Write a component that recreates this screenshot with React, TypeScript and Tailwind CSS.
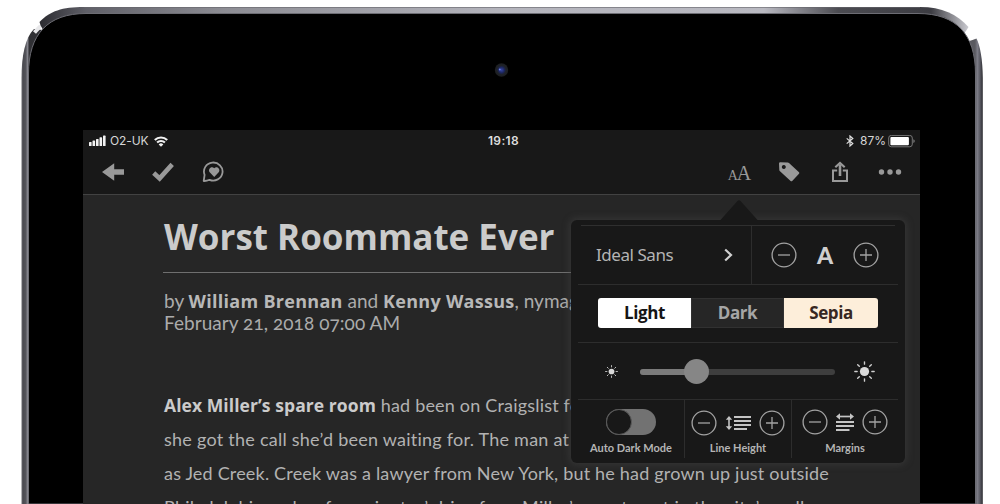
import React from "react";

function DeviceFrame() {
  return (
    <svg className="absolute inset-0" width="1000" height="504" viewBox="0 0 1000 504" aria-hidden="true">
      <defs>
        <linearGradient id="top" x1="40" x2="968" y1="0" y2="0" gradientUnits="userSpaceOnUse">
          <stop offset="0" stopColor="#2c2c31" />
          <stop offset="0.05" stopColor="#606068" />
          <stop offset="0.2" stopColor="#8d8d94" />
          <stop offset="0.5" stopColor="#b4b4bc" />
          <stop offset="0.78" stopColor="#b9b9c1" />
          <stop offset="0.86" stopColor="#4c4c52" />
          <stop offset="0.96" stopColor="#3c3c42" />
          <stop offset="1" stopColor="#c8c8ce" />
        </linearGradient>
        <linearGradient id="left" x1="21" x2="29" y1="0" y2="0" gradientUnits="userSpaceOnUse">
          <stop offset="0" stopColor="#77777d" />
          <stop offset="0.25" stopColor="#4a4a50" />
          <stop offset="0.6" stopColor="#55555b" />
          <stop offset="0.85" stopColor="#8d8d95" />
          <stop offset="1" stopColor="#303034" />
        </linearGradient>
        <linearGradient id="right" x1="975" x2="983" y1="0" y2="0" gradientUnits="userSpaceOnUse">
          <stop offset="0" stopColor="#5a5a60" />
          <stop offset="0.3" stopColor="#7c7c86" />
          <stop offset="0.6" stopColor="#5d5d66" />
          <stop offset="1" stopColor="#2a2a2e" />
        </linearGradient>
        <radialGradient id="lens">
          <stop offset="0" stopColor="#3546a8" />
          <stop offset="0.45" stopColor="#1b2458" />
          <stop offset="0.65" stopColor="#1f2229" />
          <stop offset="1" stopColor="#1c1e20" />
        </radialGradient>
      </defs>
      <path d="M21.500 504V78C21.500 56 25 38 34 29L60 32V504Z" fill="url(#left)" />
      <path d="M982.800 504V78C982.800 60 980 45 976.500 38.500L972.500 40L940 50V504Z" fill="url(#right)" />
      <path d="M39.500 22C50 11 62 7 84 7H920C942 7 957 14 968.500 27L966 31L940 60H70L41 27Z" fill="url(#top)" />
      <path d="M84 7.500H920" stroke="#66666c" strokeWidth="1" opacity="0.6" />
      <path d="M34.500 32.500L40.500 26" stroke="#e8e8ea" strokeWidth="4" />
      <path d="M28.500 504V74C28.500 34 48 13.500 86 13.500H918C956 13.500 975.500 34 975.500 74V504Z" fill="#000" stroke="#6d6d74" strokeWidth="1" />
      <circle cx="501.500" cy="70" r="6.700" fill="url(#lens)" />
      <circle cx="499.800" cy="69.500" r="1" fill="#6c7ddb" />
    </svg>
  );
}

function StatusBar() {
  return (
    <div className="grid h-[22px] grid-cols-3 items-center pl-[6px] pr-[5px] font-['Inter',sans-serif] text-[12px] text-[#d6d6d6]">
      <div className="flex items-center">
        <svg width="17" height="12" viewBox="0 0 17 12" fill="#f2f2f2">
          <rect x="0" y="7" width="2.600" height="4" rx=".6" />
          <rect x="3.500" y="5.500" width="2.600" height="5.500" rx=".6" />
          <rect x="7" y="4" width="2.600" height="7" rx=".6" />
          <rect x="10.500" y="2.300" width="2.600" height="8.700" rx=".6" />
          <rect x="14" y=".6" width="2.600" height="10.400" rx=".6" />
        </svg>
        <span className="ml-[4px] tracking-[-0.1px]">O2-UK</span>
        <svg className="ml-[5px]" width="14" height="11" viewBox="0 0 14 11" fill="none" stroke="#f2f2f2" strokeWidth="2.100">
          <path d="M.8 4.100a8.800 8.800 0 0 1 12.400 0" />
          <path d="M3.100 6.600a5.500 5.500 0 0 1 7.800 0" />
          <path d="M7 10.800L4.700 8.500a3.200 3.200 0 0 1 4.600 0Z" fill="#f2f2f2" stroke="none" />
        </svg>
      </div>
      <div className="pl-[3px] text-center font-semibold tracking-[0.35px] text-[#dedede]">19:18</div>
      <div className="flex items-center justify-end">
        <svg width="8" height="12" viewBox="0 0 8 12" fill="none" stroke="#e0e0e0" strokeWidth="1.200">
          <path d="M.7 3.400L6.800 8.500L4 11V1L6.800 3.500L.7 8.600" />
        </svg>
        <span className="ml-[6px]">87%</span>
        <svg className="ml-[2px]" width="27" height="13" viewBox="0 0 27 13">
          <rect x=".7" y=".4" width="23.600" height="11.400" rx="2.600" fill="none" stroke="#777" />
          <rect x="2.400" y="2" width="18.500" height="8.200" rx="1" fill="#fff" />
          <path d="M25.300 4.200v3.800q1.500-.4 1.500-1.900t-1.500-1.900" fill="#777" />
        </svg>
      </div>
    </div>
  );
}

function ToolButton({ children }: { children: React.ReactNode }) {
  return <button className="flex h-[40px] w-[50px] items-center justify-center">{children}</button>;
}

function Toolbar() {
  return (
    <div className="flex h-[42px] justify-between px-[5px]">
      <div className="flex">
        <ToolButton>
          <svg width="24" height="20" viewBox="0 0 24 20" fill="#999">
            <path d="M1 10L13.200 1.300V7.200H23V12.800H13.200V18.700Z" />
          </svg>
        </ToolButton>
        <ToolButton>
          <svg width="24" height="20" viewBox="0 0 24 20" fill="none" stroke="#999" strokeWidth="4.600">
            <path d="M2.700 11L8.600 16.400L21.200 2.400" />
          </svg>
        </ToolButton>
        <ToolButton>
          <svg className="ml-[2px]" width="24" height="22" viewBox="0 0 24 22">
            <path d="M1.700 20L2.600 13.800A9.300 9 0 1 1 7.600 18.800Q4.500 20.200 1.700 20Z" fill="none" stroke="#999" strokeWidth="1.800" strokeLinejoin="round" />
            <path d="M12.200 16L7.700 11.200C5.300 8.300 9.600 4.300 12.200 7.300C14.800 4.300 19.100 8.300 16.700 11.200Z" fill="#999" />
          </svg>
        </ToolButton>
      </div>
      <div className="flex">
        <ToolButton>
          <span className="mr-px flex items-baseline pt-px font-['Liberation_Serif',serif] leading-none text-[#999]">
            <span className="text-[14px]">A</span>
            <span className="text-[20px] -ml-px">A</span>
          </span>
        </ToolButton>
        <ToolButton>
          <svg className="mr-[2px]" width="22" height="22" viewBox="0 0 22 22">
            <path fillRule="evenodd" fill="#999" d="M1 2.500Q1 1.300 2.200 1.300L9.700 1.500Q10.500 1.600 11 2.100L21 11.200Q21.700 11.900 21 12.700L14.200 20Q13.400 20.700 12.600 20L2 10.300Q1.400 9.700 1.300 9ZM5.800 3.900a2 2 0 1 0 .01 0Z" />
          </svg>
        </ToolButton>
        <ToolButton>
          <svg width="18" height="22" viewBox="0 0 18 22" fill="none" stroke="#999" strokeWidth="2">
            <path d="M6.200 9.500H2V20H16V9.500H11.800" />
            <path d="M9 15V3.500" strokeWidth="2.600" />
            <path d="M4.300 6.200L9 2L13.700 6.200" strokeWidth="2.200" />
          </svg>
        </ToolButton>
        <ToolButton>
          <svg width="24" height="6" viewBox="0 0 24 6" fill="#999">
            <circle cx="3.500" cy="3" r="2.700" />
            <circle cx="12" cy="3" r="2.700" />
            <circle cx="20.500" cy="3" r="2.700" />
          </svg>
        </ToolButton>
      </div>
    </div>
  );
}

function Article() {
  return (
    <article className="flex-1 overflow-hidden whitespace-nowrap border-t border-[#424242] bg-[#262626] pl-[80px] pr-[90px] text-[#ababab]">
      <h1 className="pl-px pt-[20px] font-['Open_Sans',sans-serif] text-[35px] leading-[44px] font-bold text-[#cbcbcb]">Worst Roommate Ever</h1>
      <hr className="mt-[13px] border-t-[1.5px] border-[#6f6f6f]" />
      <div className="mt-[17px] pl-px text-[19px] leading-[22px] [font-feature-settings:'onum']">
        <p>
          by <b className="font-['Open_Sans',sans-serif] text-[18px] font-bold tracking-[0.28px] text-[#b8b8b8]">William Brennan</b> and{" "}
          <b className="font-['Open_Sans',sans-serif] text-[18px] font-bold tracking-[0.28px] text-[#b8b8b8]">Kenny Wassus</b>, nymag.com
        </p>
        <p className="tracking-[0.05px]">February 21, 2018 07:00 AM</p>
      </div>
      <div className="mt-[54px] pl-px text-[18px] leading-[34px] tracking-[0.19px] text-[#b2b2b2]">
        <p>
          <b className="font-['Open_Sans',sans-serif] text-[17.5px] font-bold tracking-[0.07px] text-[#cbcbcb]">Alex Miller’s spare room</b> had been on Craigslist for
        </p>
        <p className="tracking-[0.25px]">she got the call she’d been waiting for. The man at the</p>
        <p>as Jed Creek. Creek was a lawyer from New York, but he had grown up just outside</p>
        <p className="tracking-[0.25px]">Philadelphia, only a few minutes’ drive from Miller’s apartment in the city’s well-</p>
      </div>
    </article>
  );
}

function RoundButton({ plus = false, label }: { plus?: boolean; label: string }) {
  return (
    <button aria-label={label} className="size-[26px] shrink-0">
      <svg width="26" height="26" viewBox="0 0 26 26" fill="none" stroke="#a3a3a3" strokeWidth="1.300">
        <circle cx="13" cy="13" r="11.900" />
        <path d={plus ? "M7 13H19M13 7V19" : "M7 13H19"} />
      </svg>
    </button>
  );
}

function Sun({ size }: { size: number }) {
  return (
    <svg width={size} height={size} viewBox="0 0 20 20" stroke="#cfcfcf" strokeWidth="1.300" strokeLinecap="round">
      <circle cx="10" cy="10" r="4.400" fill="#dadada" stroke="none" />
      {[0, 45, 90, 135, 180, 225, 270, 315].map((angle) => (
        <path key={angle} d="M10 .8V3" transform={`rotate(${angle} 10 10)`} />
      ))}
    </svg>
  );
}

function LineHeightIcon() {
  return (
    <svg width="27" height="16" viewBox="0 0 27 16" fill="none" stroke="#c4c4c4">
      <path d="M4 3V13" strokeWidth="1.600" />
      <path d="M.8 4.800L4 1L7.200 4.800ZM.8 11.200L4 15L7.200 11.200Z" fill="#c4c4c4" stroke="none" />
      <path d="M9 2H26M9 6H26M9 10H26M9 14H22" strokeWidth="2" />
    </svg>
  );
}

function MarginsIcon() {
  return (
    <svg width="20" height="18" viewBox="0 0 20 18" fill="none" stroke="#c4c4c4">
      <path d="M3 3.500H17" strokeWidth="1.700" />
      <path d="M5 .3L1 3.500L5 6.700ZM15 .3L19 3.500L15 6.700Z" fill="#c4c4c4" stroke="none" />
      <path d="M1 9H19M1 13H19M1 17H14.500" strokeWidth="2" />
    </svg>
  );
}

function SettingsPopover() {
  return (
    <section className="absolute left-[571px] top-[220px] flex h-[243px] w-[334px] flex-col rounded-[6px] bg-[#181818] px-[7px] pt-[5px] shadow-[0_0_7px_2px_rgba(75,75,75,0.4)]">
      <svg className="absolute left-[149px] top-[-21px]" width="38" height="22" viewBox="0 0 38 22">
        <path d="M0 22V21.500L17.500 2Q19 .6 20.500 2L38 21.500V22Z" fill="#181818" />
      </svg>
      <div className="mx-[3px] h-px shrink-0 bg-[#2f2f2f]" />
      <div className="flex h-[59px] shrink-0 border-b border-[#2d2d2d]">
        <div className="flex w-[174px] items-center justify-between border-r border-[#2d2d2d] pl-[18px] pr-[18px]">
          <span className="font-['Noto_Sans',sans-serif] text-[17px] tracking-[-0.45px] text-[#b4b4b4]">Ideal Sans</span>
          <svg width="9" height="14" viewBox="0 0 9 14" fill="none" stroke="#d0d0d0" strokeWidth="2.200">
            <path d="M1.200 1.500L7 7L1.200 12.500" />
          </svg>
        </div>
        <div className="flex flex-1 items-center justify-between pl-[19px] pr-[19px]">
          <RoundButton label="Smaller text" />
          <span className="text-[23px] font-black text-[#cfcfcf]">A</span>
          <RoundButton plus label="Larger text" />
        </div>
      </div>
      <div className="flex h-[58px] shrink-0 border-b border-[#2d2d2d] px-[20px] pt-[13px]">
        <div className="flex h-[30px] w-[280px] overflow-hidden rounded-[3px] text-center font-['Open_Sans',sans-serif] text-[17px] leading-[30px] font-bold tracking-[-0.4px]">
          <button className="w-[93px] bg-white text-[#151515]">Light</button>
          <button className="w-[93px] border border-[#313131] bg-[#262626] leading-[28px] text-[#a6a6a6]">Dark</button>
          <button className="w-[94px] bg-[#fdeeda] text-[#372722]">Sepia</button>
        </div>
      </div>
      <div className="flex h-[57px] shrink-0 items-center border-b border-[#2d2d2d] pl-[27px] pr-[23px]">
        <Sun size={13} />
        <div className="relative ml-[22px] mt-[2px] h-[6px] w-[195px] rounded-full bg-[#3e3e3e]">
          <div className="h-full w-[56px] rounded-full bg-[#7b7b7b]" />
          <div className="absolute left-[44px] top-[-10px] size-[25px] rounded-full bg-[#868686]" />
        </div>
        <div className="ml-[19px]"><Sun size={21} /></div>
      </div>
      <div className="flex h-[58px] text-center font-['Lato',sans-serif] text-[11px] leading-[14px] font-bold text-[#b4b4b4]">
        <div className="w-[107px] shrink-0 border-r border-[#2d2d2d] pt-[9px]">
          <button aria-label="Auto Dark Mode" className="mx-auto flex h-[26px] w-[50px] rounded-full bg-[#727272]">
            <span className="size-[26px] rounded-full border border-[#5a5a5a] bg-[#181818]" />
          </button>
          <p className="mt-[6px]">Auto Dark Mode</p>
        </div>
        <div className="w-[107px] shrink-0 border-r border-[#2d2d2d] pt-[10px]">
          <div className="flex items-center justify-between px-[6px]">
            <RoundButton label="Decrease line height" />
            <LineHeightIcon />
            <RoundButton plus label="Increase line height" />
          </div>
          <p className="mt-[5px]">Line Height</p>
        </div>
        <div className="w-[106px] shrink-0 pt-[9px]">
          <div className="flex items-center justify-between pl-[10px] pr-[10px]">
            <RoundButton label="Decrease margins" />
            <MarginsIcon />
            <RoundButton plus label="Increase margins" />
          </div>
          <p className="mt-[6px]">Margins</p>
        </div>
      </div>
    </section>
  );
}

export default function App() {
  return (
    <main className="relative h-[504px] w-[1000px] overflow-hidden bg-white pl-[83px] pt-[130px] font-['Lato',sans-serif]">
      <DeviceFrame />
      <div className="relative flex h-[374px] w-[837px] flex-col bg-[#181818]">
        <StatusBar />
        <Toolbar />
        <Article />
      </div>
      <SettingsPopover />
    </main>
  );
}
